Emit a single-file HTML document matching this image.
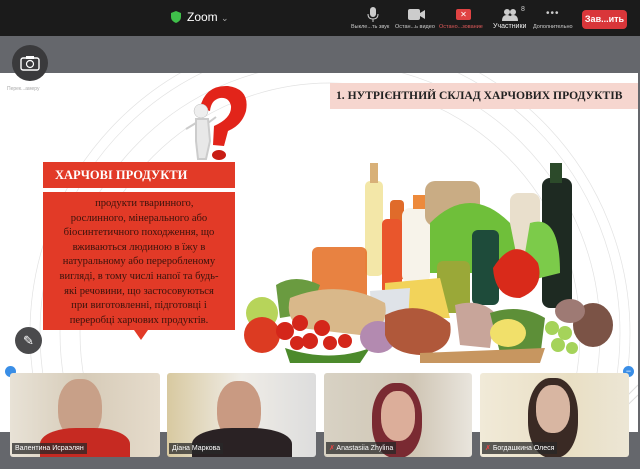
<!DOCTYPE html>
<html><head><meta charset="utf-8"><style>
*{margin:0;padding:0;box-sizing:border-box}
html,body{width:640px;height:469px;overflow:hidden}
body{background:#65676c;font-family:"Liberation Sans",sans-serif;position:relative}
.top{position:absolute;left:0;top:0;width:640px;height:36px;background:#1b1b1b;color:#fff}
.lbl{position:absolute;top:24px;font-size:5.5px;color:#ccc;white-space:nowrap}
.slide{position:absolute;left:0;top:73px;width:638px;height:359px;background:#fff;overflow:hidden}
.title{position:absolute;left:330px;top:10px;width:308px;height:26px;background:#f6d6cf;font-family:"Liberation Serif",serif;font-weight:bold;font-size:11.6px;line-height:26px;padding-left:6px;color:#222;white-space:nowrap;overflow:hidden}
.h{position:absolute;left:43px;top:89px;width:192px;height:26px;background:#e23a27;color:#fff;font-family:"Liberation Serif",serif;font-weight:bold;font-size:12.5px;line-height:26px;padding-left:12px}
.b{position:absolute;left:43px;top:119px;width:192px;height:138px;background:#e23a27;color:#3a130c;font-family:"Liberation Serif",serif;font-size:10.6px;line-height:14.6px;text-align:center;padding-top:5px;white-space:nowrap}
.tile{position:absolute;top:373px;height:84px;border-radius:3px;overflow:hidden}
.nm{position:absolute;left:2px;bottom:3px;background:rgba(40,40,40,.75);color:#fff;font-size:7px;padding:2px 3px}
</style></head><body>
<div class="top">
 <svg style="position:absolute;left:171px;top:11px" width="10" height="12"><path d="M5 0L10 2V6Q10 10 5 12Q0 10 0 6V2Z" fill="#3fbf4a"/></svg>
 <div style="position:absolute;left:187px;top:10px;font-size:12px">Zoom <span style="font-size:9px;color:#aaa">⌄</span></div>
 <svg style="position:absolute;left:367px;top:7px" width="12" height="16"><rect x="3" y="0" width="6" height="10" rx="3" fill="#ccc"/><path d="M1 7Q1 12 6 12Q11 12 11 7M6 12V15" stroke="#ccc" fill="none"/></svg>
 <svg style="position:absolute;left:408px;top:9px" width="18" height="11"><rect x="0" y="0" width="12" height="11" rx="2" fill="#ccc"/><path d="M12 4L17 1V10L12 7Z" fill="#ccc"/></svg>
 <div style="position:absolute;left:456px;top:9px;width:15px;height:11px;background:#e04343;border-radius:2px;color:#fff;font-size:8px;text-align:center;line-height:11px">✕</div>
 <svg style="position:absolute;left:502px;top:9px" width="16" height="12"><circle cx="5" cy="3" r="3" fill="#ccc"/><circle cx="11" cy="3" r="3" fill="#ccc"/><path d="M0 12Q0 6 5 6Q10 6 10 12Z M7 12Q7 6 11 6Q16 6 16 12Z" fill="#ccc"/></svg>
 <div style="position:absolute;left:521px;top:6px;font-size:7px;color:#ccc">8</div>
 <div style="position:absolute;left:546px;top:8px;font-size:10px;color:#ccc;letter-spacing:1px">•••</div>
 <div class="lbl" style="left:351px">Выкле...ть звук</div>
 <div class="lbl" style="left:395px">Остан...ь видео</div>
 <div class="lbl" style="left:439px;color:#e05a5a">Остано...зование</div>
 <div class="lbl" style="left:493px;font-size:7px;color:#eee;top:23px">Участники</div>
 <div class="lbl" style="left:533px">Дополнительно</div>
 <div style="position:absolute;left:582px;top:10px;width:45px;height:19px;background:#d9363a;border-radius:4px;font-size:9px;font-weight:bold;text-align:center;line-height:19px">Зав...ить</div>
</div>
<div class="slide">
 <svg width="638" height="359" style="position:absolute;left:0;top:0">
  <g fill="none" stroke="#e2e2e2" stroke-width=".7">
   <circle cx="330" cy="260" r="300"/><circle cx="330" cy="260" r="290"/><circle cx="330" cy="260" r="270"/><circle cx="330" cy="260" r="250"/>
  </g>
  <path d="M200 35Q205 12 228 13Q250 16 246 38Q242 52 228 58L224 73L213 72L214 53Q232 45 231 33Q229 24 220 25Q211 27 210 38Z" fill="#e2241a"/>
  <ellipse cx="219" cy="82" rx="7" ry="5" fill="#c81d14"/>
  <circle cx="201" cy="38" r="7" fill="#eee" stroke="#bbb" stroke-width=".5"/>
  <path d="M196 46L208 46L210 68L206 86L198 86L196 68Z M196 50L186 56M208 50L216 44" fill="#e8e8e8" stroke="#ccc" stroke-width="2"/>
  <rect x="365" y="108" width="18" height="95" rx="5" fill="#f3e7a8"/><rect x="370" y="90" width="8" height="20" fill="#d8b078"/>
  <rect x="390" y="127" width="14" height="80" rx="4" fill="#e06b2a"/>
  <rect x="402" y="135" width="28" height="75" rx="8" fill="#f7f3ea"/><rect x="413" y="122" width="14" height="14" fill="#ed8a3b"/>
  <rect x="425" y="108" width="55" height="45" rx="10" fill="#c9ac84"/>
  <rect x="510" y="120" width="30" height="80" rx="8" fill="#e9dfcc"/>
  <rect x="542" y="105" width="30" height="130" rx="8" fill="#1e2a22"/><rect x="550" y="90" width="12" height="20" fill="#2c4a2a"/>
  <path d="M430 150Q470 110 510 150L520 200L430 200Z" fill="#6fbf3a"/>
  <path d="M530 150Q560 140 560 200L520 210Z" fill="#7ccb4a"/>
  <rect x="312" y="174" width="55" height="55" rx="6" fill="#e5742c" opacity=".9"/>
  <rect x="382" y="146" width="20" height="75" rx="5" fill="#e9562c"/>
  <rect x="437" y="188" width="33" height="52" rx="6" fill="#9aa838"/>
  <rect x="472" y="157" width="27" height="75" rx="6" fill="#1e4b3a"/>
  <path d="M493 195Q515 160 538 190Q545 215 520 225Q495 225 493 195Z" fill="#d92a1a"/>
  <path d="M385 210L440 205L450 245L385 245Z" fill="#f2d35a"/>
  <path d="M370 218L410 215L408 248L372 250Z" fill="#dfe3e8"/>
  <path d="M276 212Q295 200 320 212L310 240L280 245Z" fill="#6a9b40"/>
  <path d="M290 225Q340 205 385 230Q390 258 360 262L300 255Q285 245 290 225Z" fill="#d9b88a"/>
  <circle cx="262" cy="240" r="16" fill="#b7d45a"/>
  <circle cx="262" cy="262" r="18" fill="#dc3b22"/>
  <g fill="#d4261a"><circle cx="285" cy="258" r="9"/><circle cx="300" cy="250" r="8"/><circle cx="310" cy="268" r="8"/><circle cx="322" cy="255" r="8"/><circle cx="297" cy="270" r="7"/><circle cx="345" cy="268" r="7"/><circle cx="330" cy="270" r="7"/></g>
  <path d="M285 275Q330 290 370 275L360 290L290 290Z" fill="#4c8a2c"/>
  <ellipse cx="378" cy="264" rx="18" ry="16" fill="#b38ab0"/>
  <path d="M385 242Q420 225 450 250Q455 278 420 282Q390 280 385 262Z" fill="#b0583a"/>
  <path d="M455 232Q480 225 495 240L490 275L460 272Z" fill="#c8a59a"/>
  <path d="M490 240Q520 230 545 245L540 285L500 280Z" fill="#5d8f38"/>
  <ellipse cx="508" cy="260" rx="18" ry="14" fill="#f1e06a"/>
  <path d="M420 280L545 275L540 290L420 290Z" fill="#c79660"/>
  <g fill="#a5d35a"><circle cx="552" cy="255" r="7"/><circle cx="565" cy="260" r="7"/><circle cx="558" cy="272" r="7"/><circle cx="572" cy="275" r="6"/><circle cx="580" cy="258" r="6"/></g>
  <ellipse cx="593" cy="252" rx="20" ry="22" fill="#7b5346"/>
  <ellipse cx="570" cy="238" rx="15" ry="12" fill="#9e7a74"/>
  <path d="M620 330L638 312M600 359L638 322" stroke="#ddd"/>
 </svg>
 <div class="title">1. НУТРІЄНТНИЙ СКЛАД ХАРЧОВИХ ПРОДУКТІВ</div>
 <div class="h">ХАРЧОВІ ПРОДУКТИ</div>
 <div class="b">&nbsp;&nbsp;&nbsp;&nbsp;продукти тваринного,<br>рослинного, мінерального або<br>біосинтетичного походження, що<br>вживаються людиною в їжу в<br>натуральному або переробленому<br>вигляді, в тому числі напої та будь-<br>які речовини, що застосовуються<br>при виготовленні, підготовці і<br>переробці харчових продуктів.</div>
 <div style="position:absolute;left:134px;top:257px;width:0;height:0;border-left:7px solid transparent;border-right:7px solid transparent;border-top:10px solid #e23a27"></div>
</div>
<div style="position:absolute;left:12px;top:45px;width:36px;height:36px;border-radius:50%;background:#3a3a3c"></div>
<svg style="position:absolute;left:20px;top:55px" width="20" height="16"><rect x="1" y="3" width="18" height="12" rx="2" fill="none" stroke="#fff" stroke-width="1.4"/><rect x="6" y="1" width="8" height="3" fill="#fff"/><circle cx="10" cy="9" r="3.5" fill="none" stroke="#fff" stroke-width="1.2"/></svg>
<div style="position:absolute;left:7px;top:86px;font-size:5px;color:#aaa">Перек...амеру</div>
<div style="position:absolute;left:15px;top:327px;width:27px;height:27px;border-radius:50%;background:#4a4a4c;color:#fff;font-size:13px;text-align:center;line-height:27px">✎</div>
<div style="position:absolute;left:5px;top:366px;width:11px;height:11px;border-radius:50%;background:#3a8ee6"></div>
<div style="position:absolute;left:623px;top:366px;width:11px;height:11px;border-radius:50%;background:#3a8ee6;color:#fff;font-size:9px;text-align:center;line-height:10px">−</div>
<div class="tile" style="left:10px;width:150px;background:linear-gradient(90deg,#e8e2d6,#d6cbb8 50%,#e6dccc)"><div style="position:absolute;left:48px;top:6px;width:44px;height:60px;border-radius:45%;background:#c8a088"></div><div style="position:absolute;left:30px;top:55px;width:90px;height:40px;border-radius:40% 40% 0 0;background:#c62a22"></div><div class="nm">Валентина Исраэлян</div></div>
<div class="tile" style="left:167px;width:149px;background:linear-gradient(90deg,#d8c9a0,#efece6 50%,#ddd)"><div style="position:absolute;left:50px;top:8px;width:44px;height:60px;border-radius:45%;background:#c99a82"></div><div style="position:absolute;left:25px;top:55px;width:100px;height:40px;border-radius:40% 40% 0 0;background:#2a2224"></div><div class="nm">Діана Маркова</div></div>
<div class="tile" style="left:324px;width:148px;background:linear-gradient(90deg,#d8d2c4,#cfc5b4 60%,#e9e5dd)"><div style="position:absolute;left:48px;top:10px;width:50px;height:75px;border-radius:45%;background:#7a2a32"></div><div style="position:absolute;left:57px;top:18px;width:34px;height:50px;border-radius:45%;background:#dcae9a"></div><div class="nm"><span style="color:#e44">✗</span> Anastasiia Zhylina</div></div>
<div class="tile" style="left:480px;width:149px;background:linear-gradient(90deg,#f1ead8,#e9dfc4 60%,#ece6d5)"><div style="position:absolute;left:48px;top:5px;width:50px;height:80px;border-radius:45%;background:#3a2a24"></div><div style="position:absolute;left:56px;top:12px;width:34px;height:48px;border-radius:45%;background:#d8b6a2"></div><div class="nm"><span style="color:#e44">✗</span> Богдашкина Олеся</div></div>
</body></html>
